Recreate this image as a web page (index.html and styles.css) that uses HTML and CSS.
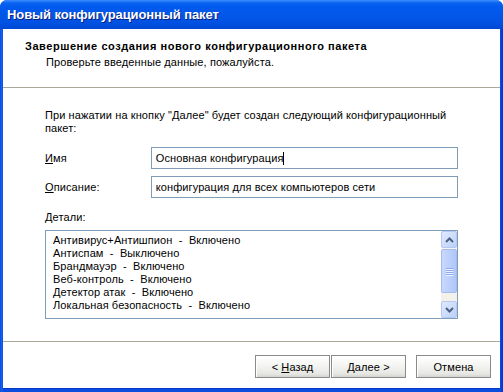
FILE: index.html
```html
<!DOCTYPE html>
<html lang="ru">
<head>
<meta charset="utf-8">
<title>Новый конфигурационный пакет</title>
<link rel="stylesheet" href="styles.css">
</head>
<body>
<div class="window">
  <div class="titlebar"><span class="title">Новый конфигурационный пакет</span></div>
  <div class="client">
    <div class="header">
      <div class="h-title">Завершение создания нового конфигурационного пакета</div>
      <div class="h-sub">Проверьте введенные данные, пожалуйста.</div>
    </div>
    <div class="body">
      <p class="intro">При нажатии на кнопку "Далее" будет создан следующий конфигурационный пакет:</p>
      <div class="field">
        <label class="lbl"><u>И</u>мя</label>
        <div class="input">Основная конфигурация<span class="caret"></span></div>
      </div>
      <div class="field">
        <label class="lbl"><u>О</u>писание:</label>
        <div class="input">конфигурация для всех компьютеров сети</div>
      </div>
      <div class="lbl details-lbl"><u>Д</u>етали:</div>
      <div class="listbox">
        <div class="rows">
          <div class="row">Антивирус+Антишпион&nbsp; -&nbsp; Включено</div>
          <div class="row">Антиспам&nbsp; -&nbsp; Выключено</div>
          <div class="row">Брандмауэр&nbsp; -&nbsp; Включено</div>
          <div class="row">Веб-контроль&nbsp; -&nbsp; Включено</div>
          <div class="row">Детектор атак&nbsp; -&nbsp; Включено</div>
          <div class="row">Локальная безопасность&nbsp; -&nbsp; Включено</div>
        </div>
        <div class="scrollbar">
          <div class="sb-btn"><svg width="9" height="6" viewBox="0 0 9 6"><path d="M1 5 L4.5 1.5 L8 5" fill="none" stroke="#4d6185" stroke-width="2"/></svg></div>
          <div class="sb-thumb"><span class="grip"></span><span class="grip"></span><span class="grip"></span><span class="grip"></span></div>
          <div class="sb-track"></div>
          <div class="sb-btn"><svg width="9" height="6" viewBox="0 0 9 6"><path d="M1 1 L4.5 4.5 L8 1" fill="none" stroke="#4d6185" stroke-width="2"/></svg></div>
        </div>
      </div>
    </div>
    <div class="footer">
      <div class="btn-pair">
        <button class="btn">&lt; <u>Н</u>азад</button>
        <button class="btn"><u>Д</u>алее &gt;</button>
      </div>
      <button class="btn">Отмена</button>
    </div>
  </div>
</div>
</body>
</html>
```
FILE: styles.css
```css
* { box-sizing: border-box; }
html, body { margin: 0; padding: 0; }
body {
  width: 503px;
  height: 392px;
  overflow: hidden;
  font-family: "Liberation Sans", Arial, sans-serif;
  font-size: 11px;
  letter-spacing: 0.1px;
  color: #000;
  background: #fff;
}
.window {
  width: 503px;
  height: 392px;
  display: flex;
  flex-direction: column;
  background: linear-gradient(to right, #0831d9 0, #166aee 1px, #0a4ee0 3px, #0a4ee0 500px, #0831d9 503px);
  border-radius: 7px 7px 0 0;
}
.titlebar {
  height: 29px;
  flex: none;
  border-radius: 7px 7px 0 0;
  background: linear-gradient(to bottom, #3c8eff 0, #0a62f0 3px, #005aee 7px, #0357e8 16px, #0050e0 24px, #0047d4 29px);
  display: flex;
  align-items: center;
  padding: 0 0 1px 7px;
}
.title {
  color: #fff;
  font-weight: bold;
  font-size: 13px;
  letter-spacing: -0.1px;
  text-shadow: 1px 1px 0 #0a1e80;
}
.client {
  flex: 1;
  margin: 0 3px 3px;
  background: #fff;
  display: flex;
  flex-direction: column;
  border-bottom: 1px solid #0836c8;
}
.header {
  height: 59px;
  flex: none;
  padding: 11px 0 0 22px;
  border-bottom: 1px solid #aca899;
  box-shadow: 0 1px 0 #fff;
}
.h-title {
  font-weight: bold;
  line-height: 13px;
  letter-spacing: 0.55px;
}
.h-sub {
  margin-top: 3px;
  padding-left: 21px;
  line-height: 13px;
}
.body {
  flex: 1;
  padding: 21px 42px 0 42px;
}
.intro {
  margin: 0;
  line-height: 13px;
  width: 420px;
}
.field {
  display: flex;
  align-items: center;
  margin-top: 7px;
}
.field:first-of-type { margin-top: 12px; }
.lbl {
  width: 106px;
  line-height: 13px;
}
.input {
  width: 308px;
  height: 22px;
  border: 1px solid #7f9db9;
  padding: 0 0 0 4px;
  display: flex;
  align-items: center;
  line-height: 13px;
}
.caret {
  display: inline-block;
  width: 1px;
  height: 13px;
  background: #000;
}
.details-lbl {
  margin-top: 13px;
}
.listbox {
  margin-top: 6px;
  width: 413px;
  height: 89px;
  border: 1px solid #7f9db9;
  display: flex;
}
.rows {
  flex: 1;
  padding: 3px 0 0 7px;
}
.row {
  line-height: 13px;
  height: 13px;
}
.scrollbar {
  width: 17px;
  display: flex;
  flex-direction: column;
  background: #f5f4ee;
  border-left: 1px solid #fff;
}
.sb-btn {
  height: 17px;
  flex: none;
  border: 1px solid #b4c8f6;
  border-radius: 2px;
  background: linear-gradient(to bottom right, #e0eaff, #bcd0f8);
  display: flex;
  align-items: center;
  justify-content: center;
}
.sb-thumb {
  height: 44px;
  flex: none;
  border: 1px solid #a4bbef;
  border-radius: 2px;
  background: linear-gradient(to right, #c9d8fc, #bcd0fc 50%, #b0c6f8);
  display: flex;
  flex-direction: column;
  align-items: center;
  justify-content: center;
  gap: 1px;
  margin-top: 1px;
}
.grip {
  width: 7px;
  height: 1px;
  background: #8ca8ec;
  box-shadow: 0 1px 0 #eef3ff;
}
.sb-track { flex: 1; background: #f3f1ea; }
.footer {
  height: 47px;
  flex: none;
  border-top: 1px solid #aca899;
  display: flex;
  justify-content: flex-end;
  align-items: flex-start;
  padding: 13px 9px 0 0;
  gap: 10px;
}
.btn-pair { display: flex; gap: 1px; }
.btn {
  width: 75px;
  height: 23px;
  margin: 0;
  padding: 0;
  font: inherit;
  letter-spacing: 0.1px;
  color: #000;
  border: 1px solid #8a8a8a;
  border-radius: 0;
  background: linear-gradient(to bottom, #ffffff 0, #f6f6f4 40%, #e6e6e2 85%, #d4d4cf 100%);
  box-shadow: inset 1px 1px 0 #fff;
}
u { text-decoration: underline; text-underline-offset: 1px; }
```
